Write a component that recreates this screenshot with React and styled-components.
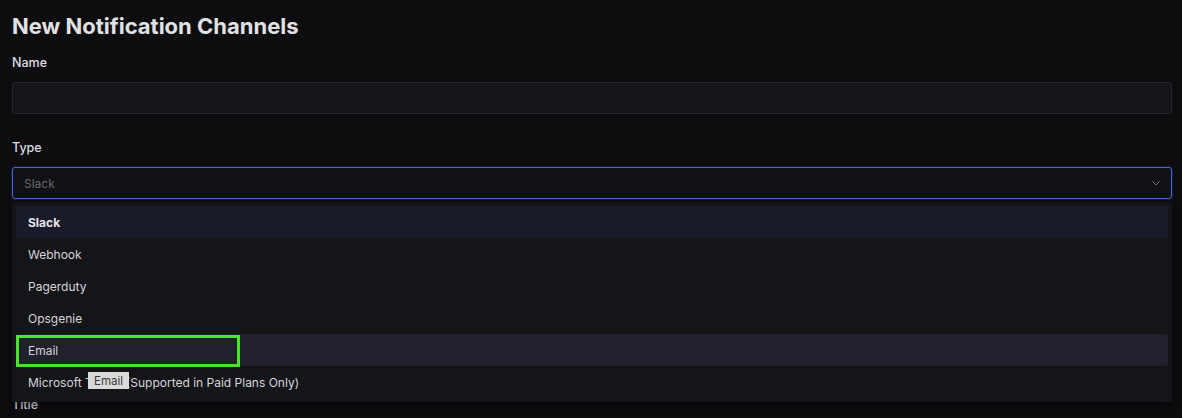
import React from "react";
import styled, { createGlobalStyle } from "styled-components";

const GlobalStyle = createGlobalStyle`
  body {
    margin: 0;
    background: #0d0d10;
    font-family: Inter, "Noto Sans", sans-serif;
    color: #dcdcde;
  }
`;

const Page = styled.div`
  padding: 12px 10px 0 12px;
  height: 418px;
  box-sizing: border-box;
  overflow: hidden;
`;

const Heading = styled.h1`
  margin: 0 0 15px 0;
  font-size: 22px;
  line-height: 28px;
  font-weight: 700;
  color: #e2e2e4;
`;

const Label = styled.div`
  font-size: 12.5px;
  line-height: 16px;
  font-weight: 500;
  color: #dedee0;
  margin-top: ${(p) => p.$top || 0}px;
  margin-bottom: 11px;
`;

const Input = styled.div`
  height: 32px;
  box-sizing: border-box;
  background: #15161a;
  border: 1px solid #26272b;
  border-radius: 3px;
`;

const SelectWrap = styled.div`
  position: relative;
`;

const Select = styled.div`
  height: 32px;
  box-sizing: border-box;
  display: flex;
  align-items: center;
  justify-content: space-between;
  padding: 0 10px 0 11px;
  background: #101115;
  border: 1px solid #5166d6;
  border-radius: 3px;
  box-shadow: 0 0 0 1px rgba(60, 80, 200, 0.18);
  font-size: 12px;
  color: #66676c;
`;

const Chevron = styled.svg`
  width: 10px;
  height: 10px;
  color: #6e6f75;
`;

const Menu = styled.div`
  position: absolute;
  left: 0;
  right: 0;
  top: calc(100% + 3px);
  padding: 4px;
  background: #141519;
  border-radius: 3px;
  box-shadow: 0 4px 10px rgba(0, 0, 0, 0.45);
  z-index: 2;
`;

const Item = styled.div`
  position: relative;
  height: 32px;
  display: flex;
  align-items: center;
  padding-left: 12px;
  border-radius: 3px;
  font-size: 12px;
  font-weight: ${(p) => (p.$selected ? 700 : 400)};
  color: ${(p) => (p.$selected ? "#e4e4ea" : "#d4d4d8")};
  background: ${(p) =>
    p.$selected ? "#1a1b29" : p.$hover ? "#20212c" : "transparent"};
`;

const Highlight = styled.div`
  position: absolute;
  left: 0;
  top: 1px;
  bottom: -1px;
  width: 224px;
  box-sizing: border-box;
  border: 3px solid #4ae52a;
`;

const Tooltip = styled.span`
  position: absolute;
  left: 72px;
  top: 6px;
  height: 17px;
  padding: 0 6px;
  display: flex;
  align-items: center;
  background: #d9d9d9;
  color: #3a3a3a;
  font-size: 11.5px;
  font-weight: 400;
`;

const options = ["Slack", "Webhook", "Pagerduty", "Opsgenie", "Email"];

export default function App() {
  return (
    <>
      <GlobalStyle />
      <Page>
        <Heading>New Notification Channels</Heading>
        <Label>Name</Label>
        <Input />
        <Label $top={26}>Type</Label>
        <SelectWrap>
          <Select>
            <span>Slack</span>
            <Chevron viewBox="0 0 10 10" fill="none">
              <path d="M1.5 3.5 L5 7 L8.5 3.5" stroke="currentColor" strokeWidth="1" />
            </Chevron>
          </Select>
          <Menu>
            {options.map((o, i) => (
              <Item key={o} $selected={i === 0} $hover={o === "Email"}>
                {o}
                {o === "Email" && <Highlight />}
              </Item>
            ))}
            <Item>
              Microsoft Teams (Supported in Paid Plans Only)
              <Tooltip>Email</Tooltip>
            </Item>
          </Menu>
        </SelectWrap>
        <Label $top={198}>Title</Label>
      </Page>
    </>
  );
}
